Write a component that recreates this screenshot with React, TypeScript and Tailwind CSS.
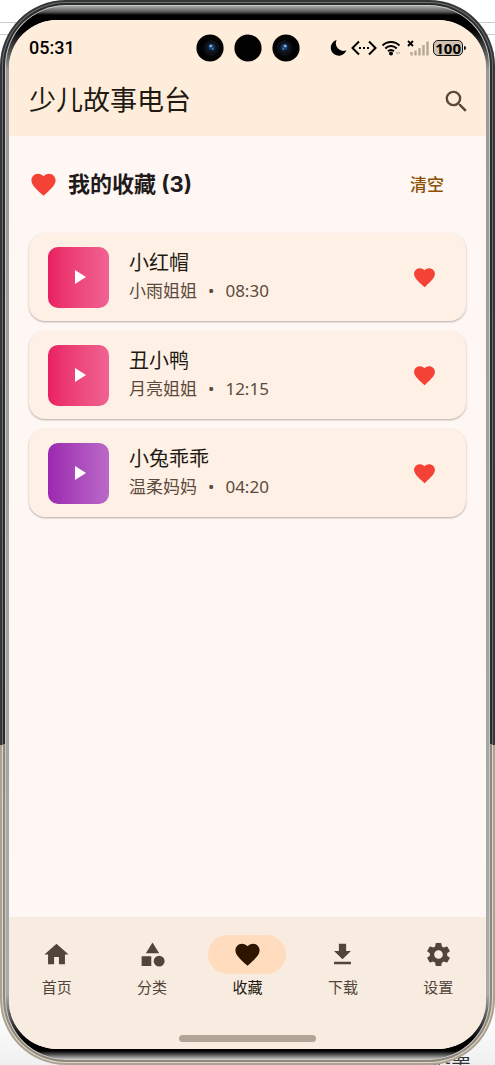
import React from "react";
import {
  MdCategory,
  MdFavorite,
  MdGetApp,
  MdHome,
  MdPlayArrow,
  MdSearch,
  MdSettings,
} from "react-icons/md";
import type { IconType } from "react-icons";

type Story = { title: string; teller: string; length: string; cover: string };

const stories: Story[] = [
  { title: "小红帽", teller: "小雨姐姐", length: "08:30", cover: "from-[#e91e63] to-[#f06292]" },
  { title: "丑小鸭", teller: "月亮姐姐", length: "12:15", cover: "from-[#e91e63] to-[#f06292]" },
  { title: "小兔乖乖", teller: "温柔妈妈", length: "04:20", cover: "from-[#9c27b0] to-[#ba68c8]" },
];

const tabs: { label: string; icon: IconType; active?: boolean }[] = [
  { label: "首页", icon: MdHome },
  { label: "分类", icon: MdCategory },
  { label: "收藏", icon: MdFavorite, active: true },
  { label: "下载", icon: MdGetApp },
  { label: "设置", icon: MdSettings },
];

function Lens({ glass, flip }: { glass?: boolean; flip?: boolean }) {
  return (
    <svg width="28" height="28" viewBox="0 0 28 28" className={flip ? "-scale-x-100" : ""} aria-hidden="true">
      <circle cx="14" cy="14" r="13.6" fill="#020203" />
      {glass && (
        <>
          <circle cx="15.5" cy="14" r="8" fill="#0c0f14" />
          <circle cx="15.5" cy="13.5" r="5" fill="#0d1c30" />
          <circle cx="15.5" cy="13" r="3" fill="#1c4270" />
          <circle cx="14.8" cy="12" r="1.3" fill="#8cc0f2" />
          <circle cx="17" cy="15" r="0.9" fill="#4288cc" />
        </>
      )}
    </svg>
  );
}

function StatusIcons() {
  return (
    <div className="flex items-center gap-1">
      <svg width="17" height="18" viewBox="0 0 17 18" aria-hidden="true">
        <path d="M6.6 1A8 8 0 1 0 16.4 11.2 7.6 7.6 0 0 1 6.6 1Z" fill="#000" />
      </svg>
      <svg width="26" height="18" viewBox="0 0 26 18" aria-hidden="true">
        <path d="M8 2.500 1.500 9 8 15.500M18 2.500 24.500 9 18 15.500" fill="none" stroke="#000" strokeWidth="2" />
        <path d="M8 8h2v2H8zM12 8h2v2h-2zM16 8h2v2h-2z" fill="#000" />
      </svg>
      <svg width="22" height="18" viewBox="0 0 22 18" aria-hidden="true">
        <path d="M1.500 6.500a12 12 0 0 1 17 0M4.300 9.500a8 8 0 0 1 11.400 0M7 12.300a4.300 4.300 0 0 1 6 0" fill="none" stroke="#000" strokeWidth="2" />
        <circle cx="10" cy="14.500" r="2" fill="#000" />
        <path d="m16.500 12.500-2 1.500 2 1.500zM17.500 12.500l2 1.500-2 1.500z" fill="#b5a698" />
      </svg>
      <svg width="22" height="18" viewBox="0 0 22 18" aria-hidden="true">
        <path d="m1 2 5 5M6 2 1 7" stroke="#000" strokeWidth="1.800" />
        <path d="M4.500 13v3.500M8.500 11.500v5M12.500 9v7.500M16.500 6v10.500M20.500 2.500v14" stroke="#b5a698" strokeWidth="2.400" />
      </svg>
      <span className="flex items-center gap-px">
        <span className="flex h-4 items-center rounded-[5px] border border-[#1c1814] bg-[#d0c1b2] px-px font-['Open_Sans'] text-[15px] font-bold text-black">
          100
        </span>
        <span className="h-1 w-0.5 rounded-r bg-black" />
      </span>
    </div>
  );
}

function StoryCard({ story }: { story: Story }) {
  return (
    <li className="flex min-h-[88px] items-center rounded-2xl bg-[#fff0e6] py-3 pr-4 pl-[19px] shadow-[0_1px_2px_rgba(40,30,25,0.35)]">
      <button
        type="button"
        aria-label={`播放 ${story.title}`}
        className={`grid size-[61px] shrink-0 place-items-center rounded-[10px] bg-linear-to-r text-white ${story.cover}`}
      >
        <MdPlayArrow size={24} />
      </button>
      <div className="ml-5 min-w-0 flex-1">
        <h3 className="text-xl leading-7 text-[#221a12]">{story.title}</h3>
        <p className="flex gap-[11px] text-[17px] leading-7 text-[#5a4a3c]">
          <span>{story.teller}</span>
          <span>•</span>
          <span>{story.length}</span>
        </p>
      </div>
      <button type="button" aria-label={`取消收藏 ${story.title}`} className="grid size-[52px] place-items-center text-[#f44336]">
        <MdFavorite size={25} />
      </button>
    </li>
  );
}

export default function App() {
  return (
    <div className="relative flex min-h-screen flex-col overflow-hidden bg-white font-['Noto_Sans','Noto_Sans_CJK_SC',sans-serif]">
      <div className="absolute inset-x-0 top-[22px] h-[13px] border-y border-[#cccccc]" />
      <div className="absolute inset-x-0 bottom-0 h-14 bg-linear-to-b from-white to-[#f0f0f0]" />
      <p className="absolute right-6 -bottom-3 text-xl leading-5 text-[#333]">设置</p>

      <div className="relative flex grow flex-col rounded-[66px] bg-[linear-gradient(#343638_70%,#aaa294_70%)] p-0.5">
        <div className="flex grow flex-col rounded-[64px] bg-[linear-gradient(#6d7072_70%,#e0d9ca_70%)] p-px">
          <div className="flex grow flex-col rounded-[63px] bg-[linear-gradient(#292b2d_70%,#8e877a_70%)] p-0.5">
            <div className="flex grow flex-col rounded-[61px] bg-[#c9c9c8] p-px">
              <div className="flex grow flex-col rounded-[60px] bg-[linear-gradient(#aaa_0px,#555_6px,#000_9px,#000_24px,#999_64px,#aaa_calc(100%-64px),#000_calc(100%-20px),#000_calc(100%-8px),#bbb_100%)] px-[3px] pt-3.5 pb-2.5">
                <main className="flex grow flex-col overflow-hidden rounded-[48px] bg-[#fff7f4]">
                  <header className="bg-[#ffeddb]">
                    <div className="relative flex h-14 items-center justify-between px-5">
                      <time className="font-[Roboto] text-lg font-medium text-black">05:31</time>
                      <div className="absolute inset-0 flex items-center justify-center gap-2.5">
                        <Lens glass />
                        <Lens />
                        <Lens glass flip />
                      </div>
                      <StatusIcons />
                    </div>
                    <div className="flex h-[60px] items-start justify-between pr-[15px] pl-5">
                      <h1 className="text-[27px] leading-[48px] text-[#221a12]">少儿故事电台</h1>
                      <button type="button" aria-label="搜索" className="grid h-[50px] place-items-center text-[#5a4a3c]">
                        <MdSearch size={29} />
                      </button>
                    </div>
                  </header>

                  <section className="grow px-5">
                    <div className="flex h-[97px] items-center pr-[22px]">
                      <MdFavorite size={29} className="text-[#f44336]" />
                      <h2 className="ml-2.5 grow font-['Inter','Noto_Sans_CJK_SC',sans-serif] text-[22px] font-bold text-[#221a1a]">
                        我的收藏 (3)
                      </h2>
                      <button type="button" className="text-[17px] font-medium text-[#8b5000]">
                        清空
                      </button>
                    </div>
                    <ul className="flex flex-col gap-2.5">
                      {stories.map((story) => (
                        <StoryCard key={story.title} story={story} />
                      ))}
                    </ul>
                  </section>

                  <footer className="bg-[#f8ebdf] pt-[18px] pb-[7px]">
                    <nav className="grid grid-cols-5">
                      {tabs.map(({ label, icon: Icon, active }) => (
                        <a
                          key={label}
                          href="#"
                          aria-current={active ? "page" : undefined}
                          className={`flex flex-col items-center ${active ? "text-[#221a12]" : "text-[#51443a]"}`}
                        >
                          <span
                            className={`grid h-[39px] w-[78px] place-items-center rounded-full ${
                              active ? "bg-[#ffdcbe] text-[#2c1600]" : ""
                            }`}
                          >
                            <Icon size={29} />
                          </span>
                          <span className="text-[15px] leading-[26px]">{label}</span>
                        </a>
                      ))}
                    </nav>
                    <div className="mx-auto mt-[35px] h-[7px] w-[137px] rounded-full bg-[#b3a498]" />
                  </footer>
                </main>
              </div>
            </div>
          </div>
        </div>
      </div>
    </div>
  );
}
